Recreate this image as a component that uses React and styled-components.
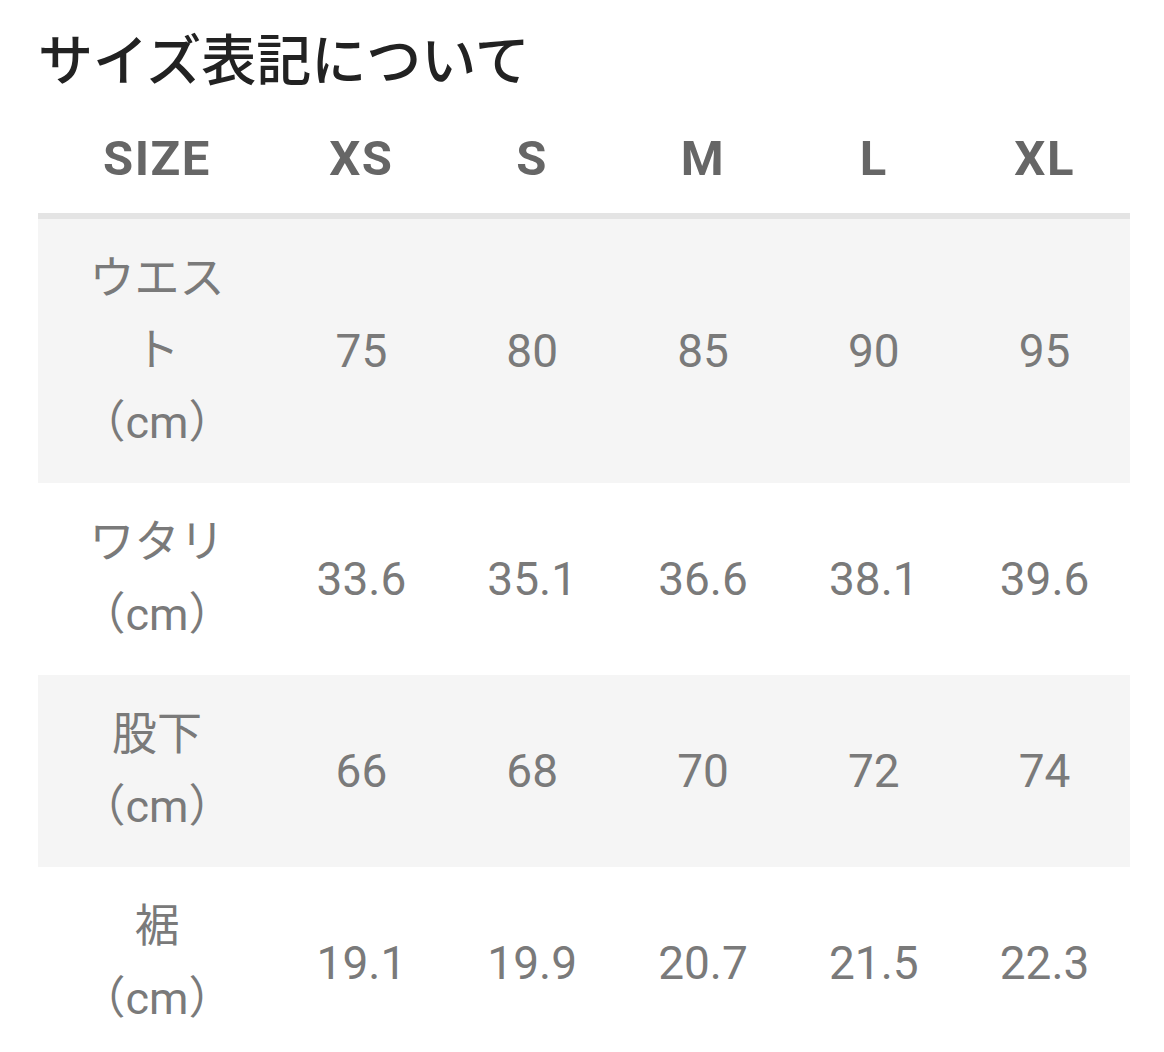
import React from 'react';
import styled, { createGlobalStyle } from 'styled-components';

const GlobalStyle = createGlobalStyle`
    body {
        margin: 0;
        background: #fff;
        font-family: Roboto, "Noto Sans CJK JP", sans-serif;
    }
`;

const Page = styled.div`
    width: 1092px;
    padding: 24px 0 0 38px;
`;

const Title = styled.h2`
    margin: 0;
    font-family: "Noto Sans CJK JP", sans-serif;
    font-size: 55px;
    line-height: 64px;
    font-weight: 500;
    color: #222;
`;

const Table = styled.div`
    margin-top: 25px;
`;

const Row = styled.div`
    display: grid;
    grid-template-columns: 238px repeat(5, 1fr);
    align-items: center;
    background: ${(p) => (p.$shaded ? '#f5f5f5' : '#fff')};
    padding: 24px 0;
`;

const HeadRow = styled(Row)`
    padding: 10px 0 18px;
    border-bottom: 6px solid #e4e4e4;
`;

const HeadCell = styled.div`
    text-align: center;
    font-family: Roboto, sans-serif;
    font-weight: 700;
    font-size: 49px;
    letter-spacing: 1.5px;
    line-height: 72px;
    color: #666;
`;

const Label = styled.div`
    padding: 0 40px;
    text-align: center;
    font-family: Roboto, "Noto Sans CJK JP", sans-serif;
    font-size: 45px;
    line-height: 72px;
    color: #7a7a7a;
`;

const Cell = styled.div`
    text-align: center;
    font-family: Roboto, sans-serif;
    font-size: 46px;
    line-height: 72px;
    color: #7a7a7a;
`;

const sizes = ['XS', 'S', 'M', 'L', 'XL'];

const rows = [
    { label: 'ウエスト', values: ['75', '80', '85', '90', '95'] },
    { label: 'ワタリ', values: ['33.6', '35.1', '36.6', '38.1', '39.6'] },
    { label: '股下', values: ['66', '68', '70', '72', '74'] },
    { label: '裾', values: ['19.1', '19.9', '20.7', '21.5', '22.3'] },
];

const App = () => {
    return (
        <Page>
            <GlobalStyle />
            <Title>サイズ表記について</Title>
            <Table>
                <HeadRow>
                    <HeadCell>SIZE</HeadCell>
                    {sizes.map((s) => (
                        <HeadCell key={s}>{s}</HeadCell>
                    ))}
                </HeadRow>
                {rows.map((r, i) => (
                    <Row key={r.label} $shaded={i % 2 === 0}>
                        <Label>
                            {r.label}
                            <br />
                            （cm）
                        </Label>
                        {r.values.map((v) => (
                            <Cell key={v}>{v}</Cell>
                        ))}
                    </Row>
                ))}
            </Table>
        </Page>
    );
};

export default App;
